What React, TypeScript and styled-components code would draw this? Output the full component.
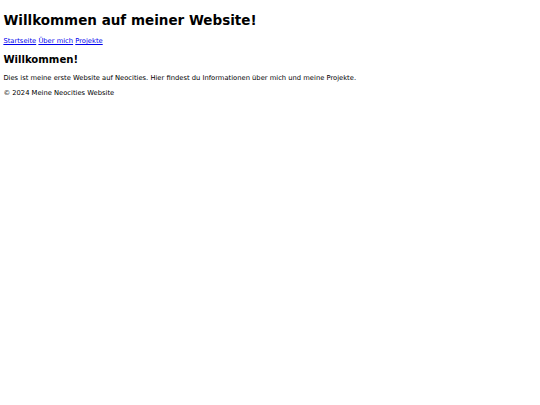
import styled, { createGlobalStyle } from "styled-components";
import { Fragment } from "react";

// the reference is a full page shot scaled down to 540px wide (1280 -> 540)
const GlobalStyle = createGlobalStyle`
    html, body{
        background: #ffffff;
    }
    body{
        margin: 3.375px;
        font-family: "DejaVu Sans", sans-serif;
        font-size: 6.75px;
        line-height: 8px;
        color: #000000;
    }
`;

const Header = styled.header`
    h1{
        font-size: 13.5px;
        line-height: 16px;
        font-weight: bold;
        margin: 0.67em 0;
    }
`;

const Nav = styled.nav`
    display: block;
`;

const NavLink = styled.a`
    color: #0000ee;
    text-decoration: underline;
`;

const Main = styled.main`
    h2{
        font-size: 10.125px;
        line-height: 11.8px;
        font-weight: bold;
        margin: 0.83em 0;
    }
    p{
        margin: 1em 0;
    }
`;

const Footer = styled.footer`
    p{
        margin: 1em 0;
    }
`;

const links = ["Startseite", "Über mich", "Projekte"];

export default function App(){
    return(
        <>
            <GlobalStyle />
            <Header>
                <h1>Willkommen auf meiner Website!</h1>
                <Nav>
                    {links.map((l, i) =>
                        <Fragment key={l}>
                            {i > 0 && " "}
                            <NavLink href="#">{l}</NavLink>
                        </Fragment>
                    )}
                </Nav>
            </Header>
            <Main>
                <h2>Willkommen!</h2>
                <p>Dies ist meine erste Website auf Neocities. Hier findest du Informationen über mich und meine Projekte.</p>
            </Main>
            <Footer>
                <p>© 2024 Meine Neocities Website</p>
            </Footer>
        </>
    )
}
